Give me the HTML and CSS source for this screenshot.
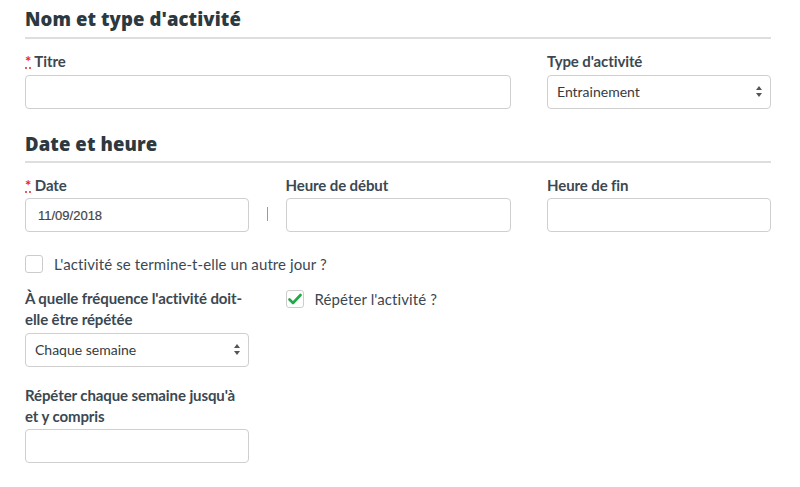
FILE: index.html
```html
<!DOCTYPE html>
<html lang="fr">
<head>
<meta charset="utf-8">
<title>Activité</title>
<link rel="stylesheet" href="styles.css">
</head>
<body>
<form class="form">
  <h2 class="section-title">Nom et type d'activité</h2>
  <div class="row row-name">
    <div class="field field-wide">
      <label class="label"><abbr class="req" title="obligatoire">*</abbr> Titre</label>
      <div class="input"></div>
    </div>
    <div class="field">
      <label class="label">Type d'activité</label>
      <div class="input select"><span>Entrainement</span>
        <svg class="arrows" width="6" height="11" viewBox="0 0 6 11"><path d="M3 0L6 4H0Z M0 7H6L3 11Z" fill="#555"/></svg>
      </div>
    </div>
  </div>

  <h2 class="section-title section-second">Date et heure</h2>
  <div class="row row-date">
    <div class="field field-date">
      <label class="label"><abbr class="req" title="obligatoire">*</abbr> Date</label>
      <div class="input input-value">11/09/2018</div>
    </div>
    <div class="field">
      <label class="label">Heure de début</label>
      <div class="input"></div>
    </div>
    <div class="field">
      <label class="label">Heure de fin</label>
      <div class="input"></div>
    </div>
  </div>

  <div class="check-line check-other-day">
    <span class="checkbox"></span>
    <span class="check-text">L'activité se termine-t-elle un autre jour ?</span>
  </div>

  <div class="row row-repeat">
    <div class="field">
      <label class="label">À quelle fréquence l'activité doit-elle être répétée</label>
      <div class="input select select-small"><span>Chaque semaine</span>
        <svg class="arrows" width="6" height="11" viewBox="0 0 6 11"><path d="M3 0L6 4H0Z M0 7H6L3 11Z" fill="#555"/></svg>
      </div>
      <label class="label label-until">Répéter chaque semaine jusqu'à et y compris</label>
      <div class="input"></div>
    </div>
    <div class="field">
      <div class="check-line check-repeat">
        <span class="checkbox">
          <svg width="14" height="12" viewBox="0 0 14 12"><path d="M1.5 6.5L5 10L12.5 2" fill="none" stroke="#22a847" stroke-width="2.6" stroke-linecap="round" stroke-linejoin="round"/></svg>
        </span>
        <span class="check-text">Répéter l'activité ?</span>
      </div>
    </div>
  </div>
</form>
</body>
</html>
```

FILE: styles.css
```css
html, body {
  margin: 0;
  padding: 0;
  background: #ffffff;
}

.form {
  width: 746px;
  padding: 0 29px 0 25px;
  font-family: Lato, "Noto Sans", sans-serif;
  color: #3b4852;
}

.section-title {
  margin: 0;
  padding: 7px 0 6px;
  font-family: "Open Sans", "DejaVu Sans", sans-serif;
  font-weight: 800;
  font-size: 18.5px;
  line-height: 24px;
  color: #2c3940;
  border-bottom: 2px solid #dedede;
  letter-spacing: 0.1px;
}

.section-second {
  margin-top: 23px;
  padding-top: 0;
  padding-bottom: 5px;
}

.row {
  display: grid;
  grid-template-columns: 224px 225px 224px;
  column-gap: 36.5px;
}

.row-name {
  margin-top: 12px;
}

.row-date {
  margin-top: 12px;
}

.field-wide {
  grid-column: span 2;
}

.field-date {
  position: relative;
}

.field-date::after {
  content: "";
  position: absolute;
  right: -19px;
  bottom: 11px;
  width: 1px;
  height: 14px;
  background: #9a9a9a;
}

.label {
  display: block;
  font-weight: 700;
  font-size: 15px;
  line-height: 21px;
  margin-bottom: 2.5px;
  color: #3b4852;
  letter-spacing: -0.1px;
}

.req {
  color: #e3262c;
  text-decoration: underline dotted #e3262c;
  border: 0;
  cursor: help;
}

.input {
  box-sizing: border-box;
  height: 34px;
  border: 1px solid #cfcfcf;
  border-radius: 4px;
  background: #fff;
  display: flex;
  align-items: center;
  font-size: 14px;
  color: #363a3d;
}

.input-value {
  padding-left: 12px;
  font-family: "Liberation Sans", Arial, sans-serif;
  font-size: 13px;
  color: #444;
  -webkit-text-stroke: 0.2px #444;
}

.select {
  justify-content: space-between;
  padding: 0 8px 0 9px;
}

.arrows {
  display: block;
}

.check-line {
  display: flex;
  align-items: center;
  height: 21px;
}

.check-other-day {
  margin-top: 21px;
}

.checkbox {
  box-sizing: border-box;
  width: 18px;
  height: 18px;
  border: 1px solid #cccccc;
  border-radius: 3px;
  background: #fff;
  display: flex;
  align-items: center;
  justify-content: center;
  flex: none;
}

.check-text {
  margin-left: 11px;
  font-size: 15px;
  color: #3b4852;
  letter-spacing: 0.1px;
}

.row-repeat {
  margin-top: 14px;
}

.check-repeat {
  margin-top: 0;
}

.label-until {
  margin-top: 18px;
}
```
